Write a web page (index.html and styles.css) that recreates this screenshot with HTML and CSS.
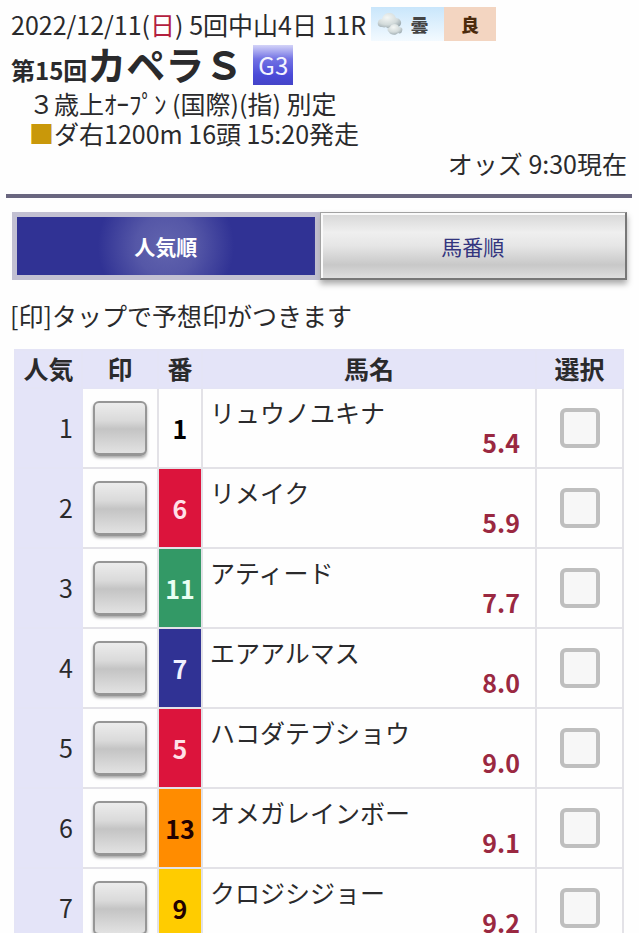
FILE: index.html
```html
<!DOCTYPE html>
<html lang="ja">
<head>
<meta charset="utf-8">
<meta name="viewport" content="width=device-width, initial-scale=1">
<title>カペラＳ オッズ</title>
<link rel="stylesheet" href="styles.css">
</head>
<body>
<header class="race">
  <div class="race-date">
    <span>2022/12/11(<span class="sunday">日</span>) 5回中山4日 11R</span>
    <span class="badges">
      <span class="weather">
        <svg class="cloud" viewBox="0 0 26 22" aria-hidden="true">
          <defs>
            <radialGradient id="puff" cx="0.4" cy="0.3" r="0.75">
              <stop offset="0" stop-color="#f4f7f5"/>
              <stop offset="0.6" stop-color="#d3dbdb"/>
              <stop offset="1" stop-color="#98a6ac"/>
            </radialGradient>
          </defs>
          <path fill="url(#puff)" d="M5 14C2 14 0 12 1 9c0-2 2-3 4-3 1-4 4-6 7-6 4 0 6 2 7 5 3 0 6 3 5 6-1 3-4 4-7 3-3 2-6 2-8 0-2 1-3 0-4 0z"/>
          <path fill="url(#puff)" d="M12 19c-2-1-2-4 1-5 1-4 8-4 9 0 3 0 4 2 3 4 0 2-2 3-4 2-2 3-8 2-9-1z"/>
        </svg>
        <span>曇</span>
      </span>
      <span class="going">良</span>
    </span>
  </div>
  <h1 class="race-title"><span class="race-count">第15回</span><span class="race-name">カペラＳ</span><span class="grade">G3</span></h1>
  <p class="race-info">３歳上ｵｰﾌﾟﾝ (国際)(指) 別定</p>
  <p class="race-info"><span class="dirt">■</span>ダ右1200m 16頭 15:20発走</p>
  <p class="odds-time">オッズ 9:30現在</p>
</header>
<main class="odds">
  <div class="tabs">
    <button type="button" class="tab tab-active" aria-pressed="true">人気順</button>
    <button type="button" class="tab" aria-pressed="false">馬番順</button>
  </div>
  <p class="hint">[印]タップで予想印がつきます</p>
  <table class="runners">
    <colgroup><col class="col-rank"><col class="col-mark"><col class="col-num"><col><col class="col-pick"></colgroup>
    <thead>
      <tr><th scope="col">人気</th><th scope="col">印</th><th scope="col">番</th><th scope="col">馬名</th><th scope="col">選択</th></tr>
    </thead>
    <tbody>
      <tr><td class="rank">1</td><td><button type="button" class="mark" aria-label="印 リュウノユキナ"></button></td><td class="num">1</td><td class="horse"><label for="h1">リュウノユキナ</label><span class="price">5.4</span></td><td><input type="checkbox" class="pick" id="h1"></td></tr>
      <tr><td class="rank">2</td><td><button type="button" class="mark" aria-label="印 リメイク"></button></td><td class="num red">6</td><td class="horse"><label for="h2">リメイク</label><span class="price">5.9</span></td><td><input type="checkbox" class="pick" id="h2"></td></tr>
      <tr><td class="rank">3</td><td><button type="button" class="mark" aria-label="印 アティード"></button></td><td class="num green">11</td><td class="horse"><label for="h3">アティード</label><span class="price">7.7</span></td><td><input type="checkbox" class="pick" id="h3"></td></tr>
      <tr><td class="rank">4</td><td><button type="button" class="mark" aria-label="印 エアアルマス"></button></td><td class="num blue">7</td><td class="horse"><label for="h4">エアアルマス</label><span class="price">8.0</span></td><td><input type="checkbox" class="pick" id="h4"></td></tr>
      <tr><td class="rank">5</td><td><button type="button" class="mark" aria-label="印 ハコダテブショウ"></button></td><td class="num red">5</td><td class="horse"><label for="h5">ハコダテブショウ</label><span class="price">9.0</span></td><td><input type="checkbox" class="pick" id="h5"></td></tr>
      <tr><td class="rank">6</td><td><button type="button" class="mark" aria-label="印 オメガレインボー"></button></td><td class="num orange">13</td><td class="horse"><label for="h6">オメガレインボー</label><span class="price">9.1</span></td><td><input type="checkbox" class="pick" id="h6"></td></tr>
      <tr><td class="rank">7</td><td><button type="button" class="mark" aria-label="印 クロジシジョー"></button></td><td class="num yellow">9</td><td class="horse"><label for="h7">クロジシジョー</label><span class="price">9.2</span></td><td><input type="checkbox" class="pick" id="h7"></td></tr>
    </tbody>
  </table>
</main>
</body>
</html>
```
FILE: styles.css
```css
* { box-sizing: border-box; }

body {
  margin: 0;
  padding: 7px 7px 0 6px;
  background: #fefefe;
  color: #2a2a2c;
  font-family: "Noto Sans CJK JP", sans-serif;
  font-size: 25px;
  line-height: 30px;
}

p, h1 { margin: 0; }
button { font-family: inherit; }

.race {
  padding: 0 5px 16px;
  border-bottom: 4px solid #69667f;
}

.race-date {
  display: flex;
  align-items: center;
  gap: 5px;
  height: 34px;
  white-space: nowrap;
}

.sunday { color: #b3203e; }

.badges {
  display: flex;
  font-size: 18px;
  font-weight: 900;
}

.weather, .going {
  display: flex;
  align-items: center;
  justify-content: center;
  height: 34px;
}

.weather {
  width: 73px;
  padding-right: 10px;
  gap: 8px;
  background: linear-gradient(#c9e6fb, #f3faff);
  color: #444;
}

.cloud { width: 26px; height: 22px; }

.going {
  width: 52px;
  background: #f3d5c1;
  color: #4b2a0c;
}

.race-title {
  display: flex;
  align-items: baseline;
  height: 47px;
  line-height: 44px;
  white-space: nowrap;
}

.race-count { font-size: 24px; }
.race-name { font-size: 39px; }

.grade {
  align-self: flex-start;
  margin: 4px 0 0 10px;
  padding: 0 5px;
  background: linear-gradient(#d3d3f8, #7272e4 35%, #4a4ad8 75%, #4444c8);
  color: #f4f4ff;
  font-size: 24px;
  font-weight: 400;
  line-height: 40px;
}

.race-info { padding-left: 18px; }
.dirt { color: #c9980a; }

.odds-time { text-align: right; }

.odds { padding: 14px 5px 0 6px; }

.tabs {
  display: grid;
  grid-template-columns: 1fr 1fr;
}

.tab {
  height: 68px;
  border: 1px solid #a2a2a2;
  border-right: 2px solid #777;
  border-bottom: 2px solid #777;
  background: linear-gradient(#d6d6d6, #efefef 30%, #e6e6e6 50%, #c8c8c8 80%, #dedede);
  box-shadow: inset 2px 2px #fafafa, 0 4px 6px #aaa;
  color: #33357e;
  font-size: 21px;
}

.tab-active {
  border: 5px solid #c2c0d2;
  background: radial-gradient(circle at center, #6264ae 0, #5557a7 30px, #303294 68px);
  box-shadow: none;
  color: #fff;
  font-weight: 700;
}

.hint { padding: 20px 0 19px; margin-left: -2px; }

.runners {
  width: calc(100% - 5px);
  margin-left: 2px;
  table-layout: fixed;
  border-collapse: collapse;
}

.col-rank { width: 67px; }
.col-mark { width: 76px; }
.col-num { width: 44px; }
.col-pick { width: 87px; }

.runners th, .runners td {
  padding: 0;
  border: 2px solid #e3e2e7;
  text-align: center;
  vertical-align: middle;
}

.runners th {
  height: 38px;
  border-color: #e4e4f6;
  background: #e4e4f8;
  line-height: 34px;
}

.runners th, .runners .rank, .num { padding-bottom: 2px; }

.runners td { height: 80px; }

.runners .rank {
  padding-right: 8px;
  border-color: #e4e4f6;
  background: #e4e4f8;
  text-align: right;
}

.mark {
  display: block;
  width: 54px;
  height: 55px;
  margin: 0 auto;
  border: 2px solid #969696;
  border-bottom-width: 3px;
  border-radius: 6px;
  background: linear-gradient(#ececec, #dadada 35%, #c4c4c4 52%, #e2e2e2);
  box-shadow: 0 2px 3px #aaa;
}

.num { color: #000; font-weight: 700; }
.red { background: #dc143c; color: #ffe1e8; }
.green { background: #339966; color: #e9fff4; }
.blue { background: #303294; color: #f0f0ff; }
.orange { background: #ff8c00; color: #200; }
.yellow { background: #ffcc00; color: #200; }

.runners .horse {
  padding: 0 15px 2px 7px;
  text-align: left;
}

.horse label, .price { display: block; }

.price {
  color: #9a2841;
  font-weight: 700;
  text-align: right;
}

.pick {
  display: block;
  appearance: none;
  width: 40px;
  height: 40px;
  margin: 0 auto;
  border: 4px solid #bfbfbf;
  border-radius: 6px;
  background: #f7f7f7;
}

.pick:checked { background: #303294; }
```
